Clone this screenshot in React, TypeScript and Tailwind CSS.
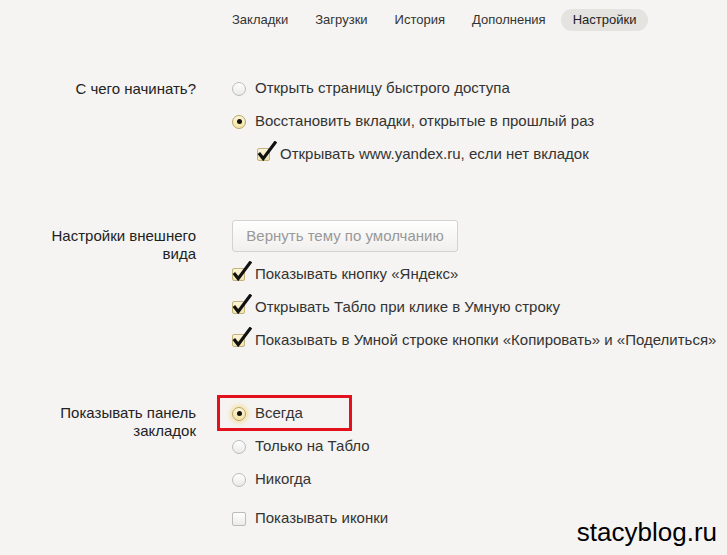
import React from 'react';

const NAV = ['Закладки', 'Загрузки', 'История', 'Дополнения', 'Настройки'];

function Radio({ checked = false, focused = false }: { checked?: boolean; focused?: boolean }) {
  if (!checked) {
    return (
      <span className="inline-block h-[14px] w-[14px] shrink-0 rounded-full border border-[#bcbcbc] bg-gradient-to-b from-white to-[#e9e9e7]" />
    );
  }
  return (
    <span
      className={
        'flex h-[14px] w-[14px] shrink-0 items-center justify-center rounded-full border border-[#b9a468] bg-gradient-to-b from-[#fdf6d6] to-[#f3e2a2] ' +
        (focused ? 'shadow-[0_0_4px_2px_rgba(245,205,90,0.55)]' : '')
      }
    >
      <span className="h-[5px] w-[5px] rounded-full bg-[#111]" />
    </span>
  );
}

function Checkbox({ checked = false }: { checked?: boolean }) {
  if (!checked) {
    return (
      <span className="inline-block h-[14px] w-[14px] shrink-0 rounded-[2px] border border-[#bcbcbc] bg-gradient-to-b from-white to-[#ebebe9]" />
    );
  }
  return (
    <span className="relative inline-block h-[13px] w-[13px] shrink-0">
      <span className="absolute inset-0 rounded-[2px] border border-[#c2b27c] bg-gradient-to-b from-[#fbf4d8] to-[#f2e4ad]" />
      {/* check mark overflows the box up and to the right */}
      <svg className="absolute left-0 top-[-7px]" width="20" height="20" viewBox="0 0 20 20">
        <path d="M2.8 13.2 L6.2 17.6 L18 1.8" fill="none" stroke="#111" strokeWidth="3.2" strokeLinecap="square" strokeLinejoin="miter" />
      </svg>
    </span>
  );
}

function Row({ children, gap = 'gap-[9px]' }: { children: React.ReactNode; gap?: string }) {
  return <div className={'flex h-[33px] items-center text-[15px] text-[#333] ' + gap}>{children}</div>;
}

export default function App() {
  return (
    <div
      className="relative h-[555px] w-[727px] overflow-hidden bg-[#f5f4f2]"
      style={{ fontFamily: '"Liberation Sans", Arial, sans-serif' }}
    >
      <nav className="flex h-[40px] items-center gap-[3px] pl-[220px] text-[13px] text-[#333]">
        {NAV.map((n) => (
          <span
            key={n}
            className={
              'flex h-[22px] items-center rounded-full px-3 ' + (n === 'Настройки' ? 'bg-[#e4e3e0] text-[#222]' : '')
            }
          >
            {n}
          </span>
        ))}
      </nav>

      <section className="mt-[32px] flex">
        <div className="w-[196px] shrink-0 text-right text-[15px] leading-[33px] text-[#222]">С чего начинать?</div>
        <div className="pl-[36px]">
          <Row>
            <Radio />
            <span>Открыть страницу быстрого доступа</span>
          </Row>
          <Row>
            <Radio checked />
            <span>Восстановить вкладки, открытые в прошлый раз</span>
          </Row>
          <div className="pl-[25px]">
            <Row gap="gap-[10px]">
              <Checkbox checked />
              <span>Открывать www.yandex.ru, если нет вкладок</span>
            </Row>
          </div>
        </div>
      </section>

      <section className="mt-[49px] flex">
        <div className="w-[196px] shrink-0 pt-[7px] text-right text-[15px] leading-[18px] text-[#222]">
          Настройки внешнего
          <br />
          вида
        </div>
        <div className="pl-[36px]">
          <button
            type="button"
            className="h-[32px] w-[226px] rounded-[3px] border border-[#d3d2cf] bg-gradient-to-b from-white to-[#f0efed] text-[15px] text-[#999]"
          >
            Вернуть тему по умолчанию
          </button>
          <div className="mt-[6px]">
            <Row gap="gap-[10px]">
              <Checkbox checked />
              <span>Показывать кнопку «Яндекс»</span>
            </Row>
            <Row gap="gap-[10px]">
              <Checkbox checked />
              <span>Открывать Табло при клике в Умную строку</span>
            </Row>
            <Row gap="gap-[10px]">
              <Checkbox checked />
              <span>Показывать в Умной строке кнопки «Копировать» и «Поделиться»</span>
            </Row>
          </div>
        </div>
      </section>

      <section className="mt-[40px] flex">
        <div className="w-[196px] shrink-0 pt-[7px] text-right text-[15px] leading-[18px] text-[#222]">
          Показывать панель
          <br />
          закладок
        </div>
        <div className="pl-[36px]">
          <div className="relative">
            <Row>
              <Radio checked focused />
              <span>Всегда</span>
            </Row>
            <span className="pointer-events-none absolute left-[-15px] top-[-2px] h-[36px] w-[135px] border-[3px] border-[#e2111b]" />
          </div>
          <Row>
            <Radio />
            <span>Только на Табло</span>
          </Row>
          <Row>
            <Radio />
            <span>Никогда</span>
          </Row>
          <div className="mt-[6px]">
            <Row>
              <Checkbox />
              <span>Показывать иконки</span>
            </Row>
          </div>
        </div>
      </section>

      <div className="absolute bottom-[10px] right-[10px] text-[26px] leading-none text-black">stacyblog.ru</div>
    </div>
  );
}
